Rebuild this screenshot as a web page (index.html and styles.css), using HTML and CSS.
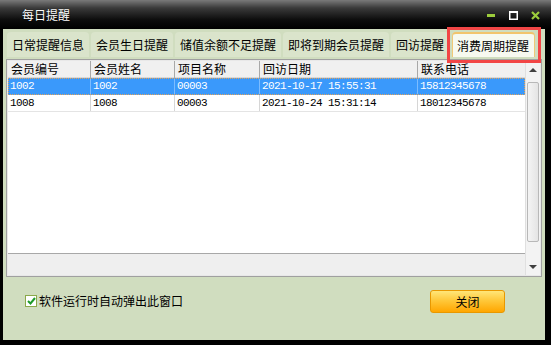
FILE: index.html
```html
<!DOCTYPE html>
<html>
<head>
<meta charset="utf-8">
<link rel="stylesheet" href="styles.css">
</head>
<body>
<div class="window">
  <div class="titlebar">
    <span class="title">每日提醒</span>
    <div class="controls">
      <svg class="ctl" width="9" height="9" viewBox="0 0 9 9"><rect x="0" y="3" width="8" height="3" fill="#9ccc3c"/></svg>
      <svg class="ctl" width="9" height="9" viewBox="0 0 9 9"><rect x="0.75" y="0.75" width="7.5" height="7.5" fill="none" stroke="#fff" stroke-width="1.5"/><rect x="0" y="0" width="9" height="2" fill="#fff"/></svg>
      <svg class="ctl" width="9" height="9" viewBox="0 0 9 9"><path d="M1 1 L8 8 M8 1 L1 8" stroke="#9ccc3c" stroke-width="2.2"/></svg>
    </div>
  </div>
  <div class="body">
    <div class="tabs">
      <div class="tab">日常提醒信息</div>
      <div class="tab">会员生日提醒</div>
      <div class="tab">储值余额不足提醒</div>
      <div class="tab">即将到期会员提醒</div>
      <div class="tab">回访提醒</div>
      <div class="tab active">消费周期提醒</div>
    </div>
    <div class="grid">
      <div class="grid-main">
        <div class="row head">
          <div class="cell c1">会员编号</div>
          <div class="cell c2">会员姓名</div>
          <div class="cell c3">项目名称</div>
          <div class="cell c4">回访日期</div>
          <div class="cell c5">联系电话</div>
        </div>
        <div class="row data selected">
          <div class="cell c1 num">1002</div>
          <div class="cell c2 num">1002</div>
          <div class="cell c3 num">00003</div>
          <div class="cell c4 num">2021-10-17 15:55:31</div>
          <div class="cell c5 num">15812345678</div>
        </div>
        <div class="row data">
          <div class="cell c1 num">1008</div>
          <div class="cell c2 num">1008</div>
          <div class="cell c3 num">00003</div>
          <div class="cell c4 num">2021-10-24 15:31:14</div>
          <div class="cell c5 num">18012345678</div>
        </div>
        <div class="filler"></div>
        <div class="grid-foot"></div>
      </div>
      <div class="vscroll">
        <div class="sbtn"><span class="arrow up"></span></div>
        <div class="thumb"></div>
        <div class="sbtn bottom"><span class="arrow down"></span></div>
      </div>
    </div>
    <div class="footer">
      <label class="check">
        <span class="box"><svg width="9" height="8" viewBox="0 0 9 8"><path d="M1 4 L3.5 6.5 L8 1" fill="none" stroke="#1e9a2a" stroke-width="2"/></svg></span>
        <span class="check-text">软件运行时自动弹出此窗口</span>
      </label>
      <button class="btn">关闭</button>
    </div>
  </div>
  <div class="highlight"></div>
</div>
</body>
</html>
```

FILE: styles.css
```css
* { box-sizing: border-box; }
html, body { margin: 0; padding: 0; }
body {
  width: 551px;
  height: 345px;
  background: #000;
  font-family: "Noto Sans CJK SC", "Noto Sans", sans-serif;
  font-size: 12px;
  overflow: hidden;
}
.window {
  position: relative;
  width: 551px;
  height: 345px;
  background: #000;
  padding: 0 6px 5px 3px;
  display: flex;
  flex-direction: column;
}
.titlebar {
  height: 29px;
  margin: 0 -6px 0 -3px;
  padding: 0 11px 0 22px;
  background: linear-gradient(#7a7a7a 0px, #3a3a3a 8px, #0c0c0c 20px, #000 29px);
  display: flex;
  align-items: center;
  justify-content: space-between;
}
.title {
  color: #fff;
  font-size: 12px;
  line-height: 14px;
  text-shadow: 0 0 1px #000;
}
.controls {
  display: flex;
  align-items: center;
  gap: 13px;
  padding-top: 1px;
}
.ctl { display: block; }
.body {
  flex: 1;
  background: #d0ddbf;
  display: flex;
  flex-direction: column;
}
.tabs {
  display: flex;
  gap: 2px;
  padding: 3px 0 0 4px;
  height: 28px;
}
.tab {
  height: 25px;
  padding: 0 5px;
  background: #dae4cb;
  border-radius: 4px 4px 0 0;
  color: #000;
  line-height: 25px;
  white-space: nowrap;
}
.tab.active {
  background: #f7f9f0;
  border: 1px solid #f0c878;
  border-top: 2px solid #f2c46c;
  border-bottom: none;
  padding: 0 5px 0 4px;
  line-height: 23px;
  margin-left: 1px;
}
.grid {
  margin: 2px 3px 0 3px;
  height: 218px;
  border: 1px solid #a0a0a0;
  padding: 1px;
  background: #e8e8e8;
  display: flex;
}
.grid-main {
  width: 517px;
  background: #fff;
  display: flex;
  flex-direction: column;
}
.row {
  display: flex;
  height: 17px;
}
.cell {
  height: 17px;
  line-height: 17px;
  padding-left: 3px;
  border-right: 1px solid #d6d6d6;
  white-space: nowrap;
  overflow: hidden;
}
.c1 { width: 83px; }
.c2 { width: 84px; }
.c3 { width: 85px; }
.c4 { width: 158px; }
.c5 { width: 107px; border-right: none; }
.head {
  background: #f0f0f0;
  border-bottom: 1px solid #d8d8d8;
}
.head .cell {
  border-right: 1px solid #a8a8a8;
  line-height: 16px;
}
.head .c5 { border-right: none; }
.num {
  font-family: "Liberation Mono", "DejaVu Sans Mono", monospace;
  font-size: 11px;
  letter-spacing: -0.6px;
  padding-left: 2px;
}
.data {
  border-bottom: 1px solid #e4e4e4;
}
.data .cell { height: 16px; line-height: 16px; }
.selected {
  background: #3a99fb;
  color: #fff;
  border: 1px dotted #e2a25a;
}
.selected .cell { height: 15px; line-height: 15px; border-right-color: #7cbcff; }
.selected .c1 { width: 82px; padding-left: 1px; }
.selected .c5 { width: 106px; }
.filler { flex: 1; background: #fff; }
.grid-foot {
  height: 22px;
  border-top: 1px solid #a8a8a8;
  background: #efefef;
}
.vscroll {
  width: 15px;
  background: #f3f3f3;
  border-left: 1px solid #e0e0e0;
  display: flex;
  flex-direction: column;
}
.sbtn {
  height: 17px;
  display: flex;
  align-items: center;
  justify-content: center;
}
.sbtn.bottom { margin-top: auto; }
.arrow {
  width: 0;
  height: 0;
  border-left: 4px solid transparent;
  border-right: 4px solid transparent;
}
.arrow.up { border-bottom: 4px solid #404040; }
.arrow.down { border-top: 4px solid #404040; }
.thumb {
  margin: 4px 1px 0 1px;
  height: 160px;
  border: 1px solid #b8b8b8;
  border-radius: 2px;
  background: linear-gradient(90deg, #f4f4f4, #e4e4e4);
}
.footer {
  flex: 1;
  display: flex;
  align-items: flex-start;
  justify-content: space-between;
  padding: 13px 40px 0 22px;
}
.check {
  display: flex;
  align-items: center;
  gap: 2px;
  margin-top: 4px;
}
.box {
  width: 12px;
  height: 12px;
  border: 1px solid #8aa84a;
  background: #fff;
  display: flex;
  align-items: center;
  justify-content: center;
}
.box svg { display: block; }
.check-text { line-height: 14px; color: #000; }
.btn {
  width: 75px;
  height: 23px;
  border: 1px solid #e89800;
  border-radius: 3px;
  background: linear-gradient(#ffe679, #ffc83a 45%, #ffa600);
  font-family: "Noto Sans CJK SC", sans-serif;
  font-size: 12px;
  color: #000;
  padding: 0;
  line-height: 21px;
}
.highlight {
  position: absolute;
  left: 447px;
  top: 27px;
  width: 94px;
  height: 36px;
  border: 3px solid #f24646;
}
```
